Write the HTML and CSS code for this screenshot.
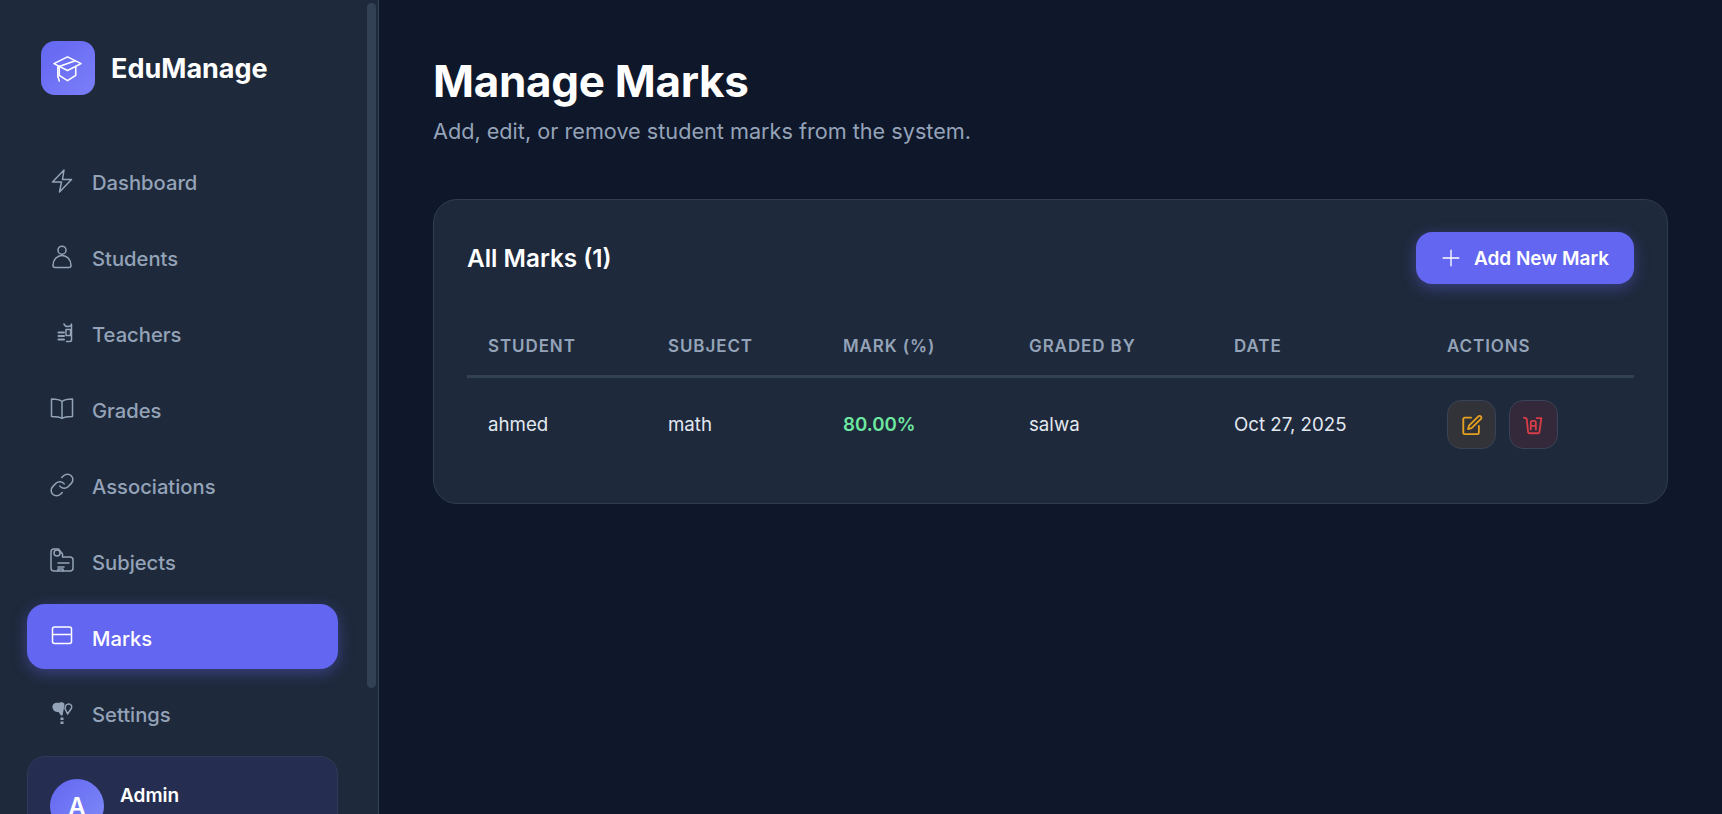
FILE: index.html
```html
<!DOCTYPE html>
<html lang="en">
<head>
  <meta charset="UTF-8" />
  <meta name="viewport" content="width=device-width, initial-scale=1.0"/>
  <title>EduManage - Manage Marks</title>
  <link rel="stylesheet" href="styles.css">
</head>
<body>
  <div class="layout">
    <aside class="sidebar">
      <div class="scroll-thumb"></div>
      <div class="brand">
        <div class="brand-logo">
          <svg viewBox="0 0 32 32" class="brand-icon">
            <path d="M16 4 L30 11 L16 18 L2 11 Z"/>
            <path d="M7.500 14 V23 L16 28.500 L24.500 23 V14"/>
            <path d="M24 8 L6 14.500 V24"/>
            <path d="M6 24 L7.500 29"/>
          </svg>
        </div>
        <span class="brand-name">EduManage</span>
      </div>

      <nav class="nav">
        <a class="nav-item" href="#">
          <svg viewBox="0 0 24 24" class="nav-icon"><path d="M14 1 2.500 13h9L9.500 23 21.500 10.500h-9z"/></svg>
          Dashboard
        </a>
        <a class="nav-item" href="#">
          <svg viewBox="0 0 24 24" class="nav-icon"><circle cx="12" cy="5.200" r="4"/><path d="M5 22.500a2 2 0 0 1-2-2c0-6 4-10 9-10s9 4 9 10a2 2 0 0 1-2 2z"/></svg>
          Students
        </a>
        <a class="nav-item" href="#">
          <svg viewBox="0 0 24 24" class="nav-icon"><path d="M14 3c.5 2 2 2.500 4 2.500s3.500-.5 3.500-2.500v16c0 1-.8 1.500-2 1.500h-3"/><rect x="16" y="8.500" width="4.500" height="6"/><path d="M8.500 11.500h5.500M8.500 15h5.500M8.500 18.500h5.500" stroke-width="2"/></svg>
          Teachers
        </a>
        <a class="nav-item" href="#">
          <svg viewBox="0 0 24 24" class="nav-icon"><path d="M12 4.500C10 2.800 6 2 1.500 2v17.500c4.500 0 8.500.5 10.500 2 2-1.500 6-2 10.500-2V2C18 2 14 2.800 12 4.500zM12 4.500v17"/></svg>
          Grades
        </a>
        <a class="nav-item" href="#">
          <svg viewBox="1 1 22 22" class="nav-icon nav-icon-thin"><path d="M10 13a5 5 0 0 0 7.540.54l3-3a5 5 0 0 0-7.070-7.070l-1.720 1.710"/><path d="M14 11a5 5 0 0 0-7.540-.54l-3 3a5 5 0 0 0 7.070 7.070l1.710-1.710"/></svg>
          Associations
        </a>
        <a class="nav-item" href="#">
          <svg viewBox="0 0 24 24" class="nav-icon"><path d="M1 3a3 3 0 0 1 3-3h4.500l4 5v3H20a3 3 0 0 1 3 3v8a3 3 0 0 1-3 3H4a3 3 0 0 1-3-3z"/><circle cx="7" cy="4" r="3"/><path d="M8 14h11M8 18h6M8 22v-2h5v2"/></svg>
          Subjects
        </a>
        <a class="nav-item active" href="#">
          <svg viewBox="0 0 24 24" class="nav-icon"><rect x="2.500" y="2" width="19" height="16.500" rx="2"/><path d="M2.500 9.500h19"/></svg>
          Marks
        </a>
        <a class="nav-item" href="#">
          <svg viewBox="0 0 24 24" class="nav-icon nav-icon-fill"><path d="M2.500 6.500C2 3 5.500 1 8.500 2c2-1.300 5-1 6 1l-1 6.500-1 5h-1.500L8.500 11C6 11.500 3 10 2.500 6.500z"/><path d="M15.500 5c1-2 3.500-2.500 5-1.500S22 6.500 21 8l-3.500 5-2.500-5.500z" fill="none" stroke="currentColor" stroke-width="1.500"/><rect x="10.500" y="16.500" width="3" height="2.500"/><rect x="10.500" y="20.500" width="3" height="2.500"/></svg>
          Settings
        </a>
      </nav>

      <div class="user-card">
        <div class="avatar">A</div>
        <div class="user-info">
          <div class="user-name">Admin</div>
          <div class="user-role">Administrator</div>
        </div>
      </div>
    </aside>

    <main class="main">
      <h1 class="page-title">Manage Marks</h1>
      <p class="page-sub">Add, edit, or remove student marks from the system.</p>

      <section class="card">
        <div class="card-head">
          <h2 class="card-title">All Marks (1)</h2>
          <button class="btn-add" type="button">
            <svg viewBox="0 0 24 24" class="btn-icon"><path d="M12 2v20M2 12h20"/></svg>
            Add New Mark
          </button>
        </div>
        <table class="marks">
          <thead>
            <tr>
              <th class="col-student">Student</th>
              <th class="col-subject">Subject</th>
              <th class="col-mark">Mark (%)</th>
              <th class="col-graded">Graded By</th>
              <th class="col-date">Date</th>
              <th class="col-actions">Actions</th>
            </tr>
          </thead>
          <tbody>
            <tr>
              <td>ahmed</td>
              <td>math</td>
              <td class="mark-value">80.00%</td>
              <td>salwa</td>
              <td>Oct 27, 2025</td>
              <td>
                <div class="actions">
                  <button class="act act-edit" type="button">
                    <svg viewBox="0 0 24 24"><path d="M11 4H4A1.500 1.500 0 0 0 2.500 5.500v15A1.500 1.500 0 0 0 4 22h14a1.500 1.500 0 0 0 1.500-1.500V13"/><path d="M19 2.500a2 2 0 0 1 2.800 2.800L11.500 15.500l-3.800 1 1-3.800z"/></svg>
                  </button>
                  <button class="act act-del" type="button">
                    <svg viewBox="0 0 24 24"><path d="M1 4 4 5l1.500 14a2 2 0 0 0 2 2h8.500a2 2 0 0 0 2-2L20 4.500h-5"/><path d="M8.500 17V9A1.500 1.500 0 0 1 10 7.500h2.500A1.500 1.500 0 0 1 14 9v8M8.500 13h5.500"/></svg>
                  </button>
                </div>
              </td>
            </tr>
          </tbody>
        </table>
      </section>
    </main>
  </div>
</body>
</html>
```

FILE: styles.css
```css
* {
  box-sizing: border-box;
}
html, body {
  height: 100%;
}
body {
  margin: 0;
  font-family: Inter, 'Noto Sans', sans-serif;
  background: #0f172a;
  color: #f1f5f9;
  overflow: hidden;
}
.layout {
  display: flex;
  height: 814px;
}

/* sidebar */
.sidebar {
  position: relative;
  width: 379px;
  flex-shrink: 0;
  height: 100%;
  background: #1e293b;
  border-right: 1px solid #334155;
  padding: 41px 40px 0 27px;
  overflow: hidden;
}
.scroll-thumb {
  position: absolute;
  top: 3px;
  right: 2px;
  width: 9px;
  height: 685px;
  background: #334155;
  border-radius: 5px;
}
.brand {
  display: flex;
  align-items: center;
  gap: 16px;
  padding-left: 14px;
  margin-bottom: 53px;
}
.brand-logo {
  width: 54px;
  height: 54px;
  border-radius: 14px;
  background: linear-gradient(135deg, #6366f1, #7c7ff8);
  display: flex;
  align-items: center;
  justify-content: center;
}
.brand-icon {
  width: 31px;
  height: 31px;
  margin-right: 2px;
  fill: none;
  stroke: #fff;
  stroke-width: 1.600;
  stroke-linejoin: round;
  stroke-linecap: round;
}
.brand-name {
  font-size: 27px;
  font-weight: 700;
  color: #fff;
}
.nav {
  display: flex;
  flex-direction: column;
  gap: 11px;
}
.nav-item {
  display: flex;
  align-items: center;
  gap: 18px;
  height: 65px;
  padding: 3.500px 0 0 23px;
  border-radius: 18px;
  color: #94a3b8;
  font-size: 20.200px;
  font-weight: 500;
  text-decoration: none;
}
.nav-item.active {
  background: #6366f1;
  color: #fff;
  box-shadow: 0 4px 15px rgba(99, 102, 241, 0.4);
}
.nav-icon {
  width: 24px;
  height: 24px;
  flex-shrink: 0;
  margin-top: -3.500px;
  fill: none;
  stroke: currentColor;
  stroke-width: 1.500;
  stroke-linejoin: round;
  stroke-linecap: round;
  overflow: visible;
}
.nav-icon-thin {
  stroke-width: 1.400;
}
.nav-icon-fill {
  fill: currentColor;
  stroke: none;
}
.user-card {
  display: flex;
  align-items: center;
  gap: 16px;
  margin-top: 11px;
  padding: 22px;
  background: #252e50;
  border: 1px solid #2f3a58;
  border-radius: 18px;
}
.avatar {
  width: 54px;
  height: 54px;
  border-radius: 50%;
  background: linear-gradient(135deg, #6366f1, #818cf8);
  color: #fff;
  font-size: 24px;
  font-weight: 600;
  display: flex;
  align-items: center;
  justify-content: center;
}
.user-name {
  font-size: 19px;
  font-weight: 600;
  color: #fff;
}
.user-role {
  font-size: 14px;
  color: #94a3b8;
  margin-top: 4px;
}

/* main */
.main {
  flex: 1;
  padding: 50px 54px 0 54px;
}
.page-title {
  margin: 0;
  font-size: 44px;
  font-weight: 700;
  letter-spacing: -0.3px;
  line-height: 62px;
  color: #fff;
}
.page-sub {
  margin: 5px 0 0;
  font-size: 21.650px;
  line-height: 28px;
  color: #94a3b8;
}
.card {
  margin-top: 54px;
  background: #1e293b;
  border: 1px solid #2f3c52;
  border-radius: 24px;
  padding: 32px 33px 32px;
}
.card-head {
  display: flex;
  align-items: center;
  justify-content: space-between;
  margin-bottom: 49px;
}
.card-title {
  margin: 0;
  font-size: 24.300px;
  font-weight: 600;
  color: #fff;
}
.btn-add {
  display: flex;
  align-items: center;
  gap: 13px;
  height: 52px;
  width: 218px;
  justify-content: center;
  border: none;
  border-radius: 16px;
  background: #6366f1;
  color: #fff;
  font-family: inherit;
  font-size: 19px;
  font-weight: 600;
  box-shadow: 0 4px 15px rgba(99, 102, 241, 0.4);
}
.btn-icon {
  width: 20px;
  height: 20px;
  fill: none;
  stroke: #fff;
  stroke-width: 1.600;
}
.marks {
  width: 100%;
  border-collapse: separate;
  border-spacing: 0;
  table-layout: fixed;
}
.marks th {
  text-align: left;
  padding: 0 0 17px 21px;
  height: 45px;
  font-size: 17px;
  font-weight: 600;
  letter-spacing: 0.900px;
  text-transform: uppercase;
  color: #94a3b8;
  border-bottom: 3px solid #334155;
}
.marks td {
  padding: 22px 0 22px 21px;
  font-size: 18.700px;
  color: #e2e8f0;
}
.col-student { width: 180px; }
.col-subject { width: 175px; }
.col-mark { width: 186px; }
.col-graded { width: 205px; }
.col-date { width: 213px; }
.mark-value {
  font-weight: 600;
}
.marks td.mark-value {
  color: #6ee7a0;
}
.actions {
  display: flex;
  gap: 13px;
}
.act {
  width: 49px;
  height: 49px;
  padding: 0;
  border-radius: 14px;
  border: 1px solid #3a4358;
  display: flex;
  align-items: center;
  justify-content: center;
}
.act svg {
  width: 22px;
  height: 22px;
  fill: none;
  stroke: currentColor;
  stroke-width: 2;
  stroke-linecap: round;
  stroke-linejoin: round;
}
.act-edit {
  background: #323338;
  color: #e6a020;
}
.act-del {
  background: #33293a;
  color: #d63d47;
}
```
